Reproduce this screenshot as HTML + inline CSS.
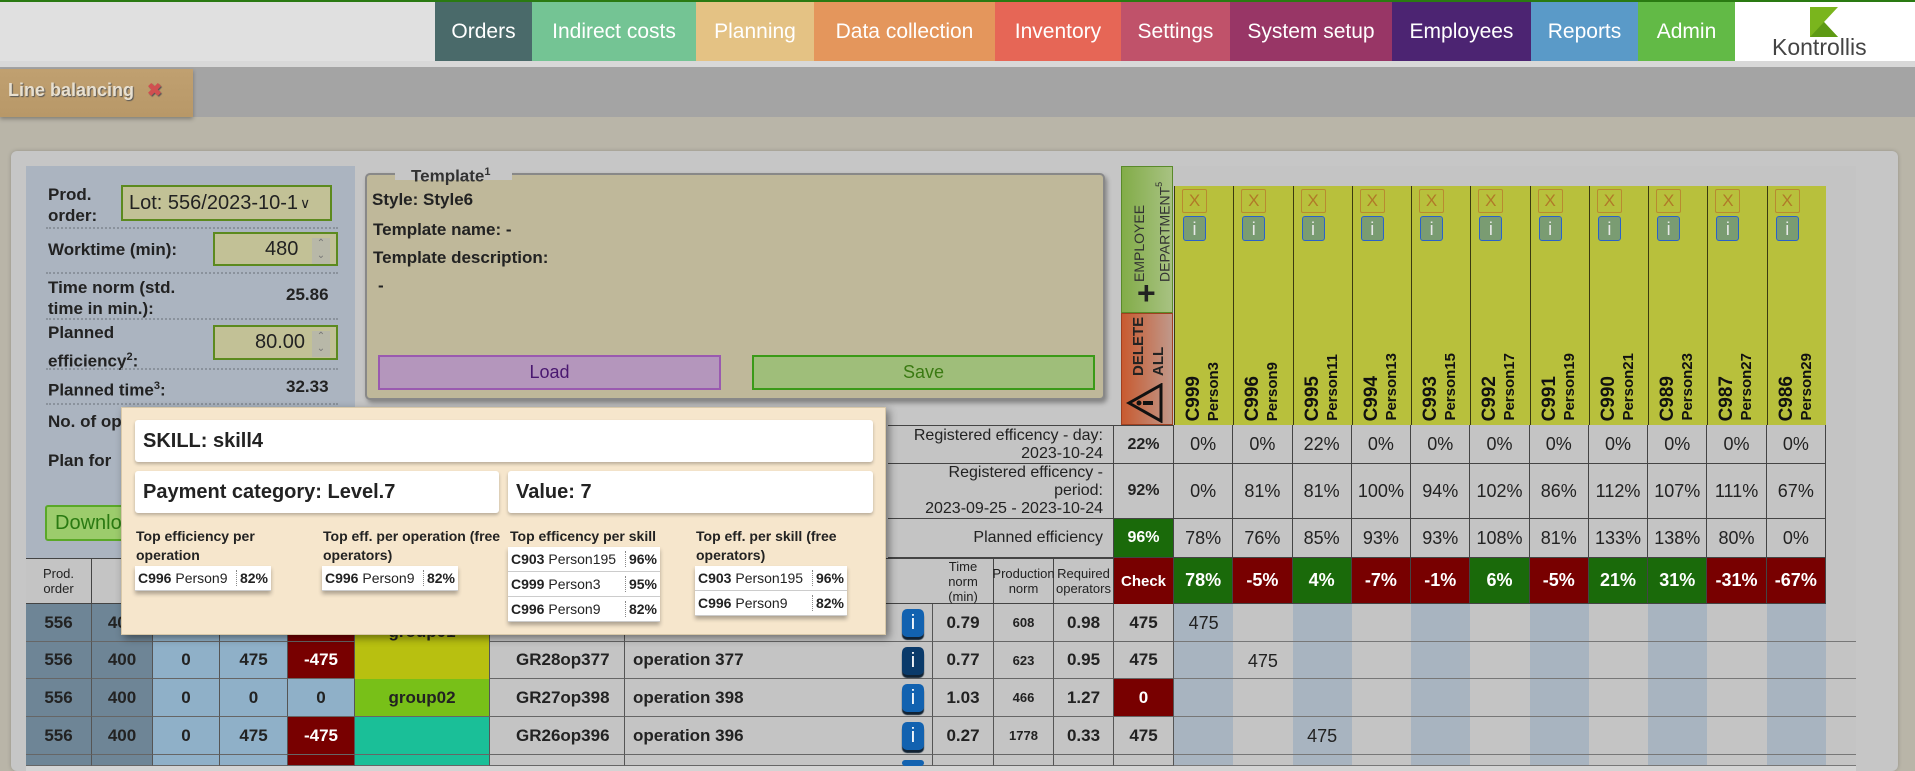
<!DOCTYPE html>
<html><head><meta charset="utf-8">
<style>
*{box-sizing:border-box;margin:0;padding:0}
html{width:1915px;height:771px;overflow:hidden}
body{width:1915px;height:771px;overflow:hidden;background:#b9b5a8;font-family:"Liberation Sans",Arial,sans-serif;position:relative;color:#222}
.a{position:absolute}
.nav{top:0;height:61px;color:#fff;font-size:21px;display:flex;align-items:center;justify-content:center;border-top:2px solid #2a7a12}
.lbl{font-size:17px;font-weight:bold;color:#222;line-height:21px}
.dot{border-top:2px dotted #8a929c;height:0;left:46px;width:292px}
.inp{background:#c2c196;border:2px solid #5c8a1e;font-size:20px;display:flex;align-items:center}
.spin{position:absolute;right:6px;top:4px;width:18px;height:26px;background:#b8b8a8;color:#777;font-size:10px;text-align:center;line-height:12px}
.ec{top:186px;height:239px;background:#b8c03c;border-left:1px solid #3a3a10}
.xb{position:absolute;left:7px;top:3px;width:25px;height:24px;border:1px solid #b88a30;color:#b07a28;font-size:17px;text-align:center;line-height:22px;border-radius:2px}
.ib{position:absolute;left:8px;top:30px;width:23px;height:25px;background:#7a9c72;border:1px solid #2a62c8;color:#e8e8e8;font-size:18px;text-align:center;line-height:24px;border-radius:3px}
.vt{position:absolute;bottom:4px;writing-mode:vertical-rl;transform:rotate(180deg);font-weight:bold;color:#111;white-space:nowrap}
.cell{display:flex;align-items:center;justify-content:center;border-right:1px solid #444;border-bottom:1px solid #444}
.pct{font-size:18px;color:#222}
.chk{color:#fff;font-weight:bold;font-size:18px}
.dc{display:flex;align-items:center;justify-content:center;font-weight:bold;font-size:17px;border-right:1px solid #555;border-bottom:1px solid #666}
.box{background:#fff;box-shadow:0 2px 3px rgba(0,0,0,.25);border-radius:3px;display:flex;align-items:center;padding-left:8px}
.mt{background:#fff;box-shadow:0 3px 4px rgba(0,0,0,.3);font-size:14px}
.mt div{height:25px;display:flex;align-items:center;padding-left:3px;border-bottom:1px solid #ccc}
.mt b.p{margin-left:auto;border-left:1px dotted #888;padding:0 3px}
.th{font-size:14px;font-weight:bold;line-height:19px;color:#222}
.hd{font-size:13px;color:#222;text-align:center;line-height:15px;display:flex;align-items:center;justify-content:center;border-right:1px solid #444}
.info{position:absolute;width:22px;height:28px;background:#1262b0;border-radius:5px;color:#fff;font-size:20px;text-align:center;line-height:28px;box-shadow:0 3px 1px #123;overflow:hidden}
</style></head><body>
<div class="a" style="left:0;top:0;width:1915px;height:61px;background:#e0e0e0;border-top:2px solid #2a7a12"></div>
<div class="a nav" style="left:435px;width:97px;background:#4a6a6a">Orders</div>
<div class="a nav" style="left:532px;width:164px;background:#74c494">Indirect costs</div>
<div class="a nav" style="left:696px;width:118px;background:#e4c284">Planning</div>
<div class="a nav" style="left:814px;width:181px;background:#e4965c">Data collection</div>
<div class="a nav" style="left:995px;width:126px;background:#e66656">Inventory</div>
<div class="a nav" style="left:1121px;width:109px;background:#c0526a">Settings</div>
<div class="a nav" style="left:1230px;width:162px;background:#983666">System setup</div>
<div class="a nav" style="left:1392px;width:139px;background:#4c2472">Employees</div>
<div class="a nav" style="left:1531px;width:107px;background:#5a9ac8">Reports</div>
<div class="a nav" style="left:1638px;width:97px;background:#62ba46">Admin</div>
<div class="a" style="left:1735px;top:2px;width:180px;height:59px;background:#fff"></div>
<svg class="a" style="left:1808px;top:7px" width="32" height="30"><polygon points="2,0 30,0 16,15 30,30 2,30" fill="#7ab51d"/><polygon points="16,15 30,30 2,30" fill="#5e9a14"/></svg>
<div class="a" style="left:1772px;top:34px;font-size:23px;color:#444">Kontrollis</div>
<div class="a" style="left:0;top:61px;width:1915px;height:6px;background:#d8d8d8"></div>
<div class="a" style="left:0;top:67px;width:1915px;height:50px;background:#a4a4a4"></div>
<div class="a" style="left:0;top:69px;width:193px;height:48px;background:linear-gradient(#c0a070,#b89868);box-shadow:0 2px 4px rgba(0,0,0,.3)"></div>
<div class="a" style="left:8px;top:80px;font-size:18px;font-weight:bold;color:#e8e0d0;text-shadow:1px 1px 1px #555">Line balancing <span style="color:#d05050;margin-left:8px">✖</span></div>

<div class="a" style="left:11px;top:151px;width:1887px;height:620px;background:#c6c6c6;border-radius:6px;box-shadow:0 0 4px rgba(0,0,0,.2)"></div>
<div class="a" style="left:1173px;top:166px;width:683px;height:600px;background:#c4c4c4"></div>
<div class="a" style="left:26px;top:166px;width:329px;height:300px;background:#abb4c0"></div>
<div class="a lbl" style="left:48px;top:184px">Prod.<br>order:</div>
<div class="a inp" style="left:121px;top:185px;width:211px;height:36px;padding-left:6px">Lot: 556/2023-10-1<span style="font-size:14px;margin-left:2px">∨</span></div>
<div class="a dot" style="top:227px"></div>
<div class="a lbl" style="left:48px;top:239px">Worktime (min):</div>
<div class="a inp" style="left:213px;top:232px;width:125px;height:34px;padding-left:50px">480<div class="spin">⌃<br>⌄</div></div>
<div class="a dot" style="top:272px"></div>
<div class="a lbl" style="left:48px;top:277px">Time norm (std.<br>time in min.):</div>
<div class="a" style="left:286px;top:285px;font-size:17px;font-weight:bold">25.86</div>
<div class="a dot" style="top:318px"></div>
<div class="a lbl" style="left:48px;top:321px;line-height:24px">Planned<br>efficiency<sup style="font-size:11px">2</sup>:</div>
<div class="a inp" style="left:213px;top:325px;width:125px;height:35px;padding-left:40px">80.00<div class="spin">⌃<br>⌄</div></div>
<div class="a dot" style="top:368px"></div>
<div class="a lbl" style="left:48px;top:376px">Planned time<sup style="font-size:11px">3</sup>:</div>
<div class="a" style="left:286px;top:377px;font-size:17px;font-weight:bold">32.33</div>
<div class="a dot" style="top:403px"></div>
<div class="a lbl" style="left:48px;top:411px">No. of op</div>
<div class="a lbl" style="left:48px;top:450px">Plan for</div>
<div class="a" style="left:26px;top:466px;width:329px;height:92px;background:#abb4c0"></div>
<div class="a" style="left:45px;top:505px;width:90px;height:36px;background:#9ccc6c;border:2px solid #5aa828;border-radius:3px;color:#2a7a12;font-size:20px;padding:5px 0 0 8px">Download</div>

<div class="a" style="left:365px;top:173px;width:740px;height:227px;background:#bfb89a;border:2px solid #888;border-radius:5px;box-shadow:2px 3px 5px rgba(0,0,0,.35)"></div>
<div class="a" style="left:395px;top:166px;width:117px;height:14px;background:#c6c6c6"></div>
<div class="a" style="left:411px;top:166px;font-size:17px;font-weight:bold;color:#333">Template<sup style="font-size:11px">1</sup></div>
<div class="a lbl" style="left:372px;top:189px">Style: Style6</div>
<div class="a lbl" style="left:373px;top:219px">Template name: -</div>
<div class="a lbl" style="left:373px;top:247px">Template description:</div>
<div class="a lbl" style="left:378px;top:275px">-</div>
<div class="a" style="left:378px;top:355px;width:343px;height:35px;background:#b496bc;border:2px solid #9a5ab0;color:#4a1870;font-size:18px;text-align:center;line-height:31px">Load</div>
<div class="a" style="left:752px;top:355px;width:343px;height:35px;background:#9fbe7a;border:2px solid #3a9a18;color:#3a7a12;font-size:18px;text-align:center;line-height:31px">Save</div>

<div class="a" style="left:1121px;top:166px;width:52px;height:147px;background:linear-gradient(90deg,#82ac48,#a8c282);border:1px solid #5a8a2a"></div>
<div class="a" style="left:1129px;top:172px;writing-mode:vertical-rl;transform:rotate(180deg);font-size:14px;line-height:20px;color:#333;height:110px">EMPLOYEE DEPARTMENT<sup style="font-size:9px">5</sup></div>
<div class="a" style="left:1137px;top:280px;font-size:32px;font-weight:bold;color:#222;line-height:26px">+</div>
<div class="a" style="left:1121px;top:313px;width:52px;height:112px;background:linear-gradient(90deg,#c85a30,#c0988a);border:1px solid #a04020"></div>
<div class="a" style="left:1129px;top:320px;writing-mode:vertical-rl;transform:rotate(180deg);font-size:15px;font-weight:bold;line-height:20px;color:#222;height:56px">DELETE ALL</div>
<svg class="a" style="left:1126px;top:383px" width="40" height="40"><polygon points="35,2 35,38 3,20" fill="none" stroke="#111" stroke-width="3"/><rect x="17" y="18" width="10" height="4" fill="#111"/><circle cx="13" cy="20" r="2.5" fill="#111"/></svg>

<div id="cols"></div>

<div class="a" style="left:888px;top:425px;width:286px;height:179px;background:#c4c4c4"></div>
<div class="a cell" style="left:888px;top:425px;width:226px;height:39px;justify-content:flex-end;text-align:right;font-size:16px;padding-right:10px;line-height:18px;border-top:1px solid #444">Registered efficency - day:<br>2023-10-24</div>
<div class="a cell" style="left:888px;top:464px;width:226px;height:55px;justify-content:flex-end;text-align:right;font-size:16px;padding-right:10px;line-height:18px">Registered efficency -<br>period:<br>2023-09-25 - 2023-10-24</div>
<div class="a cell" style="left:888px;top:519px;width:226px;height:39px;justify-content:flex-end;font-size:16px;padding-right:10px">Planned efficiency</div>
<div class="a cell" style="left:1114px;top:425px;width:60px;height:39px;font-weight:bold;font-size:16px;border-top:1px solid #444">22%</div>
<div class="a cell" style="left:1114px;top:464px;width:60px;height:55px;font-weight:bold;font-size:16px">92%</div>
<div class="a cell" style="left:1114px;top:519px;width:60px;height:39px;font-weight:bold;font-size:16px;background:#1a6a0a;color:#fff">96%</div>

<div class="a" style="left:26px;top:558px;width:1148px;height:46px;background:#c4c4c4;border-bottom:1px solid #444;border-top:1px solid #444"></div>
<div class="a hd" style="left:26px;top:558px;width:66px;height:46px">Prod.<br>order</div>
<div class="a hd" style="left:933px;top:558px;width:61px;height:46px">Time<br>norm<br>(min)</div>
<div class="a hd" style="left:994px;top:558px;width:60px;height:46px">Production<br>norm</div>
<div class="a hd" style="left:1054px;top:558px;width:60px;height:46px">Required<br>operators</div>
<div class="a hd" style="left:1114px;top:558px;width:60px;height:46px;background:#780000;font-size:15px;color:#fff;font-weight:bold">Check</div>

<div id="rows"></div>

<div class="a" style="left:121px;top:407px;width:765px;height:228px;background:#f6e6cc;border:1px solid #d8c8a8;box-shadow:3px 3px 8px rgba(0,0,0,.45)"></div>
<div class="a box" style="left:135px;top:420px;width:738px;height:42px;font-size:20px;font-weight:bold">SKILL: skill4</div>
<div class="a box" style="left:135px;top:471px;width:364px;height:42px;font-size:20px;font-weight:bold">Payment category:&nbsp;Level.7</div>
<div class="a box" style="left:508px;top:471px;width:365px;height:42px;font-size:20px;font-weight:bold">Value: 7</div>
<div class="a th" style="left:136px;top:527px;width:180px">Top efficiency per operation</div>
<div class="a th" style="left:323px;top:527px;width:180px">Top eff. per operation (free operators)</div>
<div class="a th" style="left:510px;top:527px;width:180px">Top efficency per skill</div>
<div class="a th" style="left:696px;top:527px;width:180px">Top eff. per skill (free operators)</div>
<div class="a mt" style="left:135px;top:566px;width:136px"><div><b>C996</b>&nbsp;Person9<b class="p">82%</b></div></div>
<div class="a mt" style="left:322px;top:566px;width:136px"><div><b>C996</b>&nbsp;Person9<b class="p">82%</b></div></div>
<div class="a mt" style="left:508px;top:547px;width:152px"><div><b>C903</b>&nbsp;Person195<b class="p">96%</b></div><div><b>C999</b>&nbsp;Person3<b class="p">95%</b></div><div><b>C996</b>&nbsp;Person9<b class="p">82%</b></div></div>
<div class="a mt" style="left:695px;top:566px;width:152px"><div><b>C903</b>&nbsp;Person195<b class="p">96%</b></div><div><b>C996</b>&nbsp;Person9<b class="p">82%</b></div></div>

<script>
var names=[["C999","Person3"],["C996","Person9"],["C995","Person11"],["C994","Person13"],["C993","Person15"],["C992","Person17"],["C991","Person19"],["C990","Person21"],["C989","Person23"],["C987","Person27"],["C986","Person29"]];
var day=[0,0,22,0,0,0,0,0,0,0,0],per=[0,81,81,100,94,102,86,112,107,111,67],pl=[78,76,85,93,93,108,81,133,138,80,0],ck=[78,-5,4,-7,-1,6,-5,21,31,-31,-67];
var h="",w=59.27;
var ry=[604,642,679,717,755],rh=[38,37,38,38,11];
for(var i=0;i<11;i++){var x=1174+i*w;
h+='<div class="a ec" style="left:'+x+'px;width:'+w+'px"><div class="xb">X</div><div class="ib">i</div><div class="vt" style="left:8px;font-size:19px">'+names[i][0]+'</div><div class="vt" style="left:30px;font-size:15px">'+names[i][1]+'</div></div>';
h+='<div class="a cell pct" style="left:'+x+'px;top:425px;width:'+w+'px;height:39px;background:#c4c4c4">'+day[i]+'%</div>';
h+='<div class="a cell pct" style="left:'+x+'px;top:464px;width:'+w+'px;height:55px;background:#c4c4c4">'+per[i]+'%</div>';
h+='<div class="a cell pct" style="left:'+x+'px;top:519px;width:'+w+'px;height:39px;background:#c4c4c4">'+pl[i]+'%</div>';
h+='<div class="a cell chk" style="left:'+x+'px;top:558px;width:'+w+'px;height:46px;background:'+(ck[i]>=0?'#1a6a0a':'#780000')+'">'+ck[i]+'%</div>';
h+='<div class="a" style="left:'+x+'px;top:604px;width:'+w+'px;height:162px;background:'+(i%2==0?'#a8b4c0':'#c4c4c4')+'"></div>';
}
for(var r=0;r<5;r++)h+='<div class="a" style="left:1174px;top:'+(ry[r]+rh[r]-1)+'px;width:682px;height:1px;background:#777"></div>';
document.getElementById('cols').innerHTML=h;
h='';
h+='<div class="a" style="left:1174px;top:604px;width:0;height:0"></div>';
var lbl=[["475",0,0],["475",1,1],["475",3,2]];
for(var k=0;k<3;k++){h+='<div class="a pct" style="left:'+(1174+lbl[k][2]*w)+'px;top:'+(ry[lbl[k][1]])+'px;width:'+w+'px;height:38px;display:flex;align-items:center;justify-content:center">475</div>';}
document.getElementById('cols').innerHTML+=h;
var data=[["556","400","0","475","-475","group01","GR29op","operation","0.79","608","0.98","475"],
["556","400","0","475","-475","","GR28op377","operation 377","0.77","623","0.95","475"],
["556","400","0","0","0","group02","GR27op398","operation 398","1.03","466","1.27","0"],
["556","400","0","475","-475","","GR26op396","operation 396","0.27","1778","0.33","475"],
["","","","","","","","","","","",""]];
var gc=["#b8c010","#b8c010","#78c018","#1abf98","#1abf98"];
var cx=[26,92,153,220,288,355,490,625,933,994,1054,1114,1174];
var g="";
for(var r=0;r<5;r++){var d=data[r];
for(var c=0;c<12;c++){var bg="#c4c4c4",col="#222",fs=17,al="center",pad="";
if(c<2)bg="#6e8596";else if(c<4)bg="#8fb0c8";else if(c==4){bg=(d[4]=="-475"||r==4)?"#780000":"#8fb0c8";if(d[4]=="-475")col="#fff";}
else if(c==5)bg=gc[r];else if(c==11&&d[11]=="0"){bg="#780000";col="#fff";}
if(c==9)fs=13;
var txt=d[c];
if(c==7){al="flex-start";pad="padding-left:8px;";}
if(c==6){al="flex-start";pad="padding-left:26px;";}
var wd=cx[c+1]-cx[c];if(c==7)wd=308;
g+='<div class="a dc" style="left:'+cx[c]+'px;top:'+ry[r]+'px;width:'+wd+'px;height:'+rh[r]+'px;background:'+bg+';color:'+col+';font-size:'+fs+'px;justify-content:'+al+';'+pad+(c==5&&r==0?'align-items:flex-end;border-bottom:none;':'')+(c==5&&r==1?'border-bottom:none;':'')+'">'+txt+'</div>';}
g+='<div class="info" style="left:902px;top:'+(ry[r]+5)+'px;'+(r==1?'background:#0a3a6a;':'')+(r==4?'height:6px;box-shadow:none;':'')+'">'+(r==4?'':'i')+'</div>';}
g='<div class="a" style="left:26px;top:766px;width:1830px;height:5px;background:#d4d4d4"></div>'+g;
document.getElementById('rows').innerHTML=g;
</script>
</body></html>
